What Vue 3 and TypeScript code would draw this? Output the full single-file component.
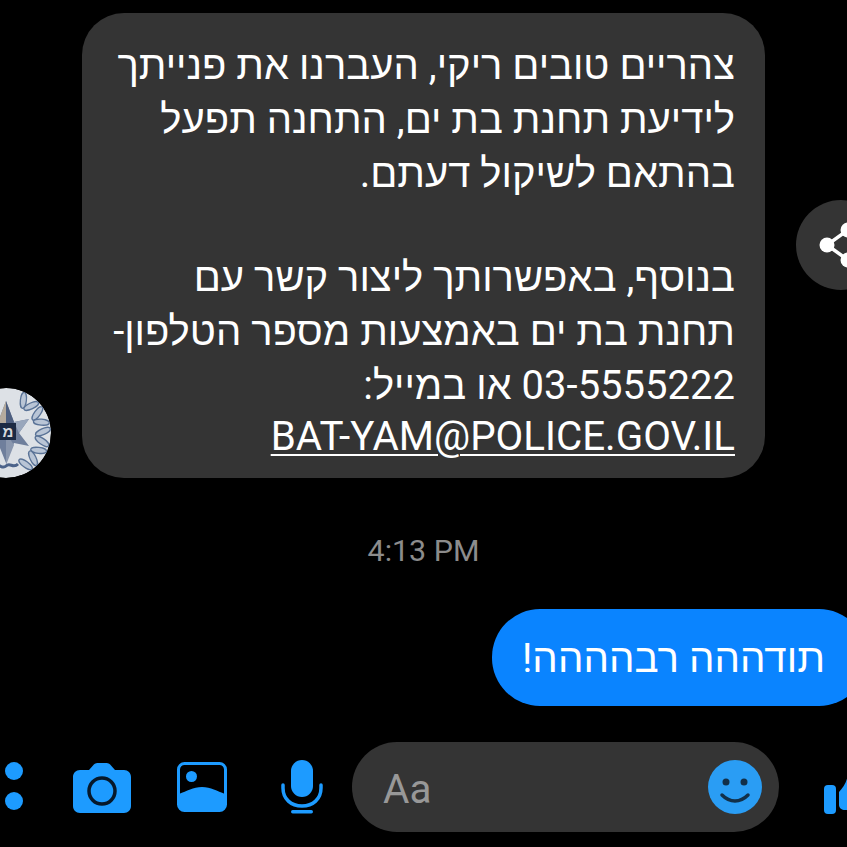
<script setup lang="ts">
const incoming = [
  'צהריים טובים ריקי, העברנו את פנייתך',
  'לידיעת תחנת בת ים, התחנה תפעל',
  'בהתאם לשיקול דעתם.',
  '',
  'בנוסף, באפשרותך ליצור קשר עם',
  'תחנת בת ים באמצעות מספר הטלפון-',
  '03-5555222 או במייל:'
]

// wreath leaves on the badge, laid along an arc
const leaves = Array.from({ length: 9 }, (_, i) => {
  const deg = -62 + i * 15
  const rad = (deg * Math.PI) / 180
  const r = 37
  return {
    x: 45 + r * Math.cos(rad),
    y: 45 + r * Math.sin(rad),
    rot: deg + 90 + (i % 2 ? 22 : -22)
  }
})
</script>

<template>
  <div class="chat">
    <div class="incoming-row">
      <div class="avatar">
        <svg viewBox="0 0 90 90" width="90" height="90">
          <circle cx="45" cy="45" r="45" fill="#dde1e6" />
          <ellipse
            v-for="(leaf, i) in leaves"
            :key="i"
            :cx="leaf.x"
            :cy="leaf.y"
            rx="3"
            ry="8"
            :transform="`rotate(${leaf.rot} ${leaf.x} ${leaf.y})`"
            fill="#b9c5d6"
            stroke="#5a7397"
            stroke-width="1.300"
          />
          <path d="M45 13l8 21l15-3l-10 14l10 13l-15-3l-8 20l-8-20l-15 3l10-13l-10-14l15 3z" fill="#6f7f9c" />
          <path d="M45 13l8 21l-8 11z" fill="#4e5f80" />
          <path d="M45 13l-8 21l8 11z" fill="#b5ab9e" />
          <path d="M45 77l8-20l-8-12z" fill="#8a97ae" />
          <path d="M58 45l10-14l-15 3z" fill="#98a6bc" />
          <path d="M28 35h27v17h-27z" fill="#1c2a44" />
          <text x="47" y="49" text-anchor="middle" font-size="15" font-weight="700" fill="#d5d9de">מ</text>
          <path d="M20 78c6-4 9 4 13 0s8 4 12 0s7 3 12-2" fill="none" stroke="#4c638a" stroke-width="3" />
        </svg>
      </div>
      <div class="bubble-wrap">
        <div class="bubble" dir="rtl">
          <div v-for="(line, i) in incoming" :key="i" class="line" :class="{ blank: !line }">{{ line || '\u00a0' }}</div>
          <a class="mail" href="mailto:bat-yam@police.gov.il">BAT-YAM@POLICE.GOV.IL</a>
        </div>
        <div class="share">
          <svg viewBox="0 0 50 50" width="50" height="50">
            <path d="M44 10L23 25L44 40" fill="none" stroke="#fff" stroke-width="3.500" />
            <circle cx="23" cy="25" r="7.500" fill="#fff" />
            <circle cx="44" cy="10" r="7.500" fill="#fff" />
            <circle cx="44" cy="40" r="7.500" fill="#fff" />
          </svg>
        </div>
      </div>
    </div>

    <div class="time">4:13 PM</div>

    <div class="outgoing-row">
      <div class="bubble-out" dir="rtl">תודההה רבהההה!</div>
    </div>

    <div class="composer">
      <div class="dots"><i></i><i></i></div>
      <svg class="ic-camera" viewBox="0 0 58 50" width="58" height="50">
        <path d="M7 7h9l4-4.500c1-1.500 2.500-2.500 4.500-2.500h9c2 0 3.500 1 4.500 2.500l4 4.500h9c4 0 7 3 7 7v29c0 4-3 7-7 7h-44c-4 0-7-3-7-7v-29c0-4 3-7 7-7z" fill="#1d9bff" />
        <circle cx="29" cy="28" r="13" fill="#1d9bff" stroke="#06182a" stroke-width="3.500" />
      </svg>
      <svg class="ic-image" viewBox="0 0 50 50" width="50" height="50">
        <rect x="1.500" y="1.500" width="47" height="47" rx="6" fill="none" stroke="#1d9bff" stroke-width="3" />
        <circle cx="14.500" cy="14.500" r="5.500" fill="#1d9bff" />
        <path d="M2 32c8-3 14-7 23-7s15 4 23 7v11c0 3-2 5-5 5h-36c-3 0-5-2-5-5z" fill="#1d9bff" />
      </svg>
      <svg class="ic-mic" viewBox="0 0 42 54" width="42" height="54">
        <rect x="10" y="0" width="22" height="37" rx="11" fill="#1d9bff" />
        <path d="M2 25v3c0 11 8 18 19 18s19-7 19-18v-3" fill="none" stroke="#1d9bff" stroke-width="3.500" stroke-linecap="round" />
        <rect x="10" y="50" width="22" height="3.500" rx="1.700" fill="#1d9bff" />
      </svg>
      <div class="input">
        <span class="placeholder">Aa</span>
        <svg viewBox="0 0 54 54" width="54" height="54">
          <circle cx="27" cy="27" r="27" fill="#2a9df4" />
          <circle cx="18" cy="22" r="3.500" fill="#123049" />
          <circle cx="36" cy="22" r="3.500" fill="#123049" />
          <path d="M14 35c4 4 8 6 13 6s9-2 13-6" fill="none" stroke="#123049" stroke-width="3.500" stroke-linecap="round" />
        </svg>
      </div>
      <svg class="ic-like" viewBox="0 0 24 50" width="24" height="50">
        <rect x="0" y="21" width="12" height="29" rx="4" fill="#1d9bff" />
        <path d="M15 28c4-4 8-10 9-18v36h-3c-3 0-6-2-6-5z" fill="#1d9bff" />
      </svg>
    </div>
  </div>
</template>

<style>
html,
body {
  margin: 0;
  background: #000;
}
</style>

<style scoped>
.chat {
  width: 847px;
  height: 847px;
  box-sizing: border-box;
  padding-top: 13px;
  background: #000;
  overflow: hidden;
  font-family: Roboto, "Liberation Sans", sans-serif;
  display: flex;
  flex-direction: column;
}

.incoming-row {
  display: flex;
  align-items: flex-end;
}

.avatar {
  width: 90px;
  height: 90px;
  margin-left: -39px;
  margin-right: 31px;
  border-radius: 50%;
  overflow: hidden;
  flex-shrink: 0;
}

.bubble-wrap {
  position: relative;
}

.bubble {
  width: 683px;
  height: 465px;
  box-sizing: border-box;
  padding: 26px 30px 0;
  background: #343434;
  border-radius: 42px;
  color: #fff;
  font-size: 40.3px;
  line-height: 54px;
}

.line {
  white-space: nowrap;
  font-size: 40px;
}

.line.blank {
  height: 50px;
}

.mail {
  color: #fff;
  text-decoration: underline;
  text-underline-offset: 4px;
  text-decoration-thickness: 2px;
  display: block;
  direction: ltr;
  text-align: right;
  margin-top: -3px;
}

.share {
  position: absolute;
  left: 714px;
  top: 187px;
  width: 90px;
  height: 90px;
  border-radius: 50%;
  background: #343434;
  display: flex;
  align-items: center;
  padding-left: 8px;
  box-sizing: border-box;
}

.time {
  margin-top: 56px;
  text-align: center;
  color: #8c8c8c;
  font-size: 30.4px;
  line-height: 34px;
}

.outgoing-row {
  margin-top: 41px;
  display: flex;
  justify-content: flex-end;
}

.bubble-out {
  width: 375px;
  height: 97px;
  margin-right: -20px;
  box-sizing: border-box;
  padding: 3px 42px 0 0;
  background: #0a84ff;
  border-radius: 48px;
  color: #fff;
  font-size: 40.3px;
  line-height: 94px;
}

.composer {
  margin-top: 36px;
  height: 90px;
  display: flex;
  align-items: center;
  position: relative;
}

.composer > * {
  flex-shrink: 0;
}

.dots {
  display: flex;
  flex-direction: column;
  gap: 12px;
  margin-left: 5px;
  margin-top: -2px;
}

.dots i {
  display: block;
  width: 18px;
  height: 18px;
  border-radius: 50%;
  background: #1d9bff;
}

.ic-camera {
  margin-left: 50px;
  margin-top: 2px;
}

.ic-image {
  margin-left: 46px;
  margin-top: 0;
}

.ic-mic {
  margin-left: 54px;
  margin-top: 0;
}

.input {
  margin-left: 29px;
  width: 427px;
  height: 90px;
  box-sizing: border-box;
  padding: 0 17px 0 31px;
  background: #343434;
  border-radius: 45px;
  display: flex;
  align-items: center;
  justify-content: space-between;
}

.placeholder {
  color: #989898;
  font-size: 40.5px;
  padding-top: 4px;
}

.ic-like {
  margin-left: 45px;
  margin-top: 4px;
}
</style>
